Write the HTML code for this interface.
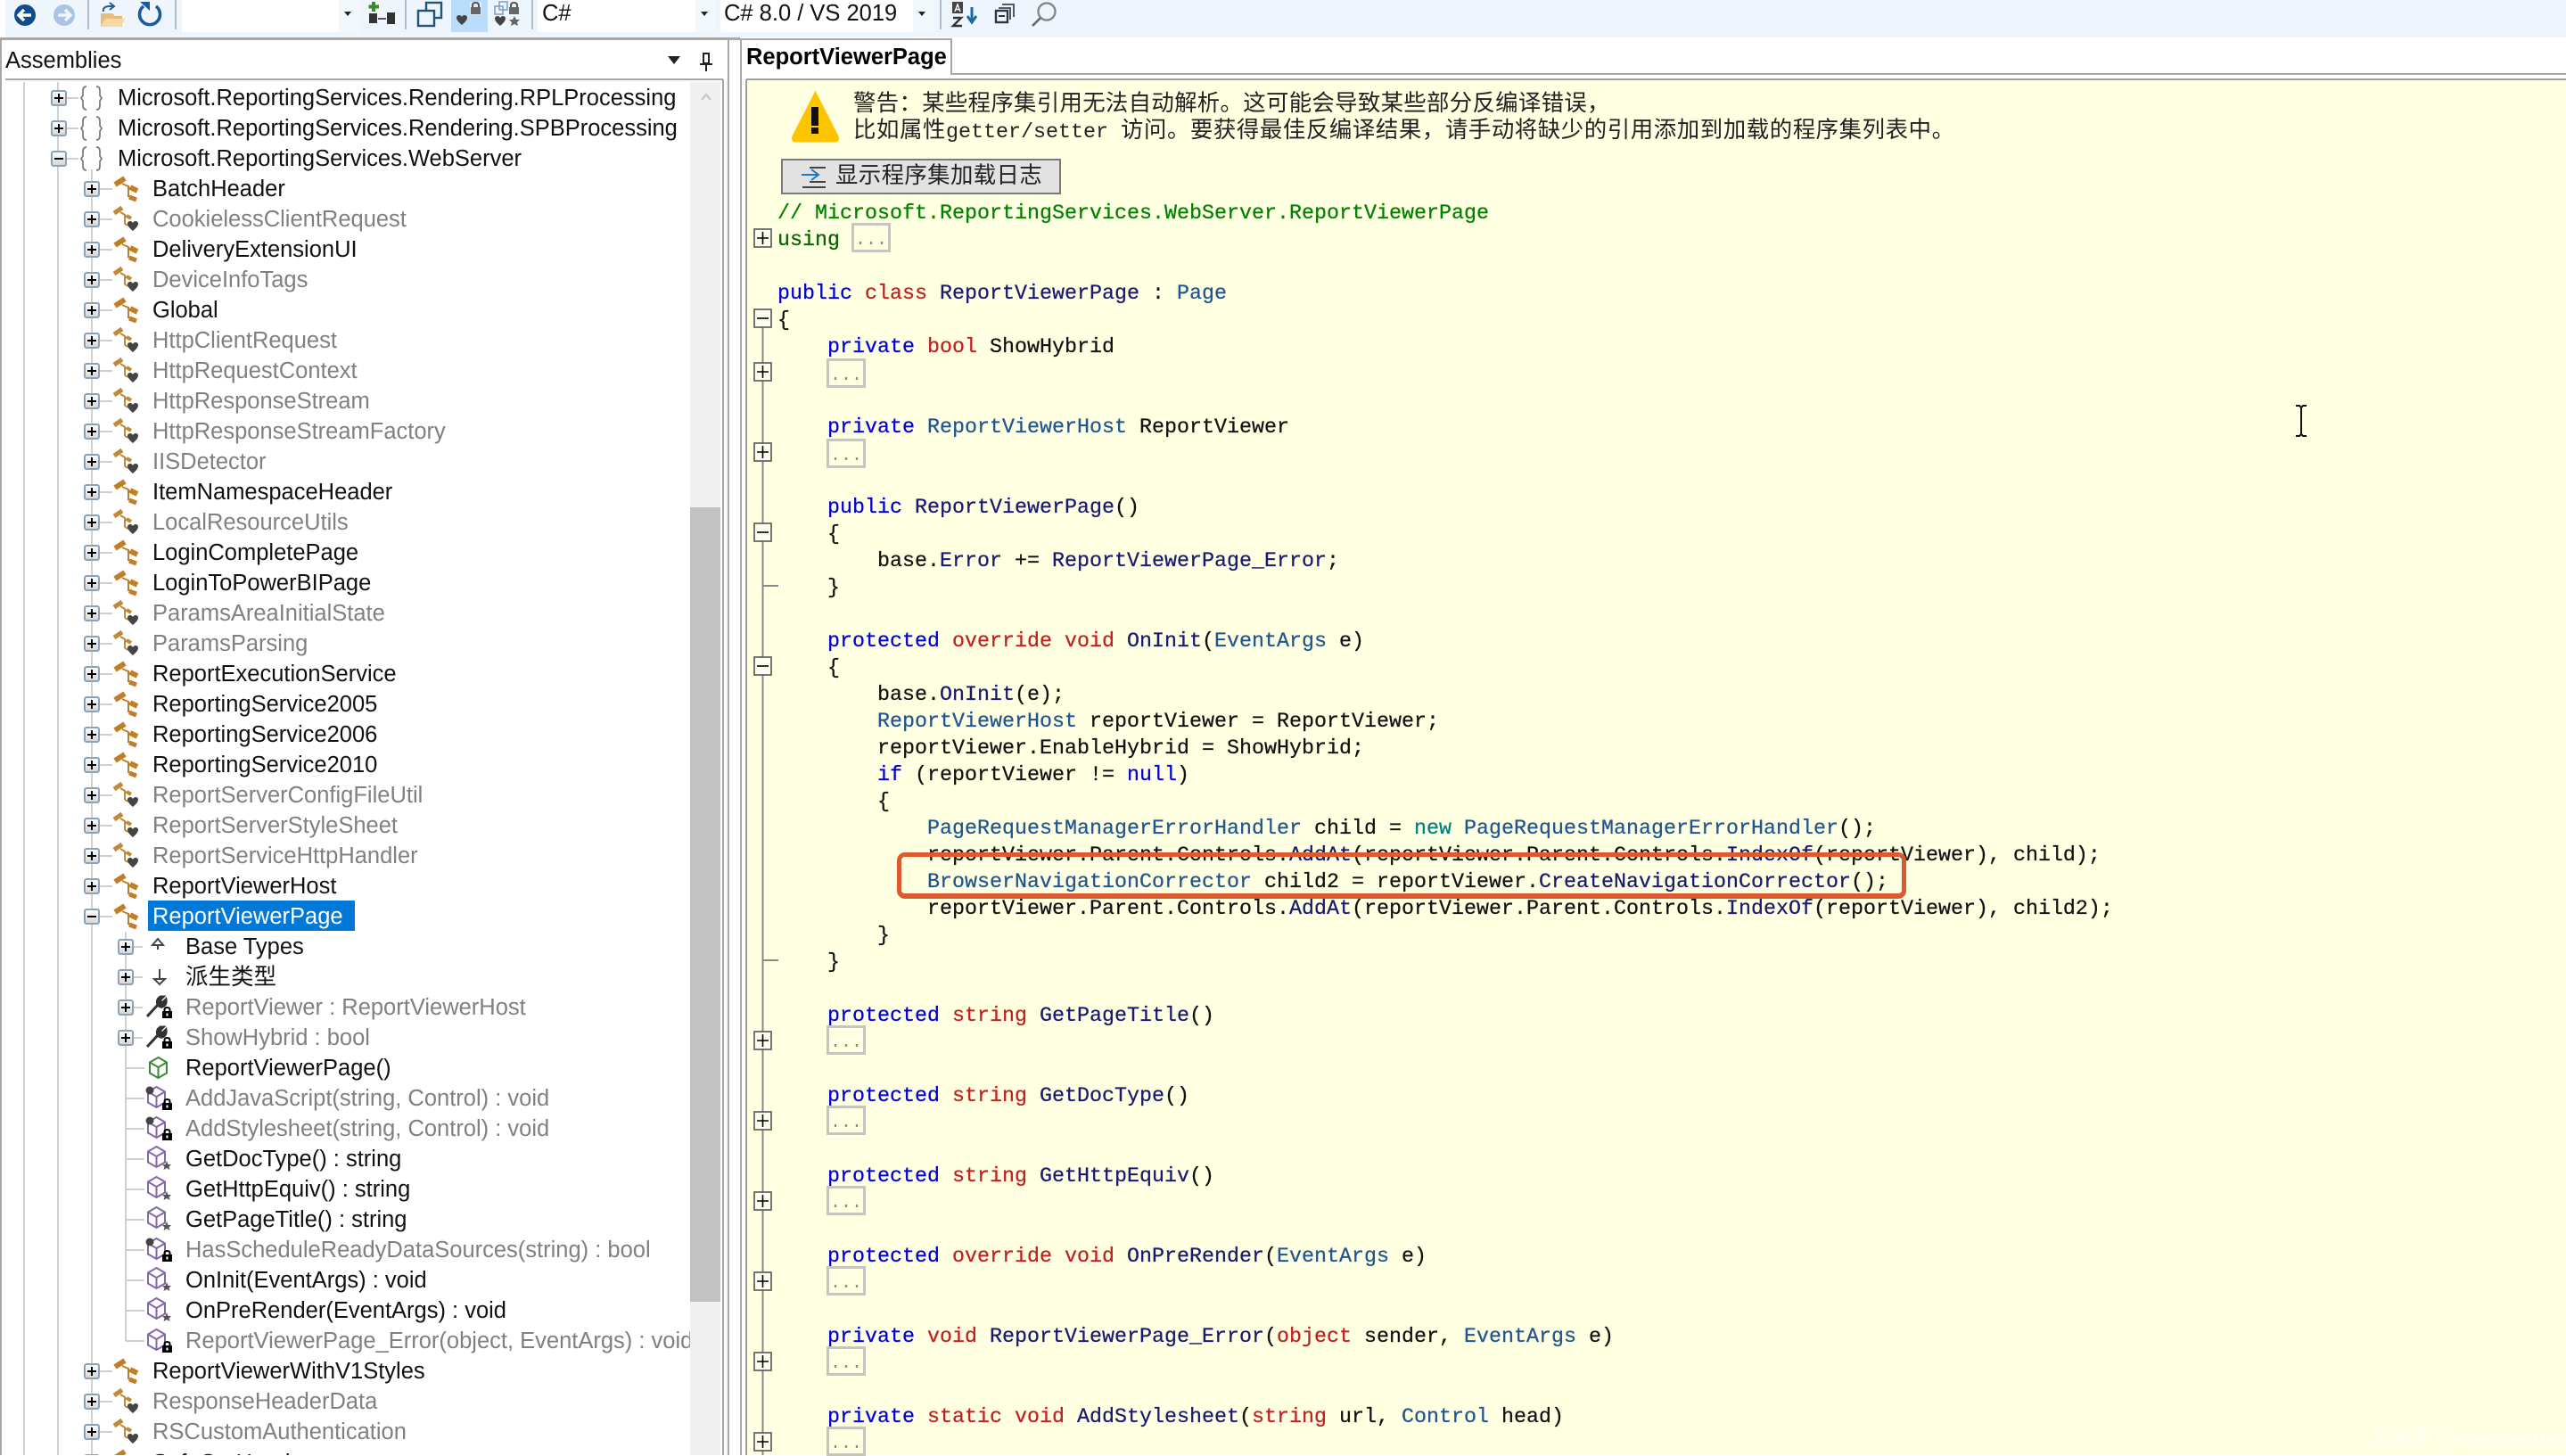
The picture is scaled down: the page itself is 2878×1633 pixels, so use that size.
<!DOCTYPE html>
<html lang="zh"><head><meta charset="utf-8"><title>ILSpy</title>
<style>
html,body{margin:0;padding:0;background:#fff}
body{position:relative;width:2878px;height:1632px;overflow:hidden;font-family:"Liberation Sans","Noto Sans CJK SC",sans-serif;color:#111}
.a{position:absolute}
.t{position:absolute;white-space:nowrap;font:25.5px/34px "Liberation Sans","Noto Sans CJK SC",sans-serif;color:#111}
.g{color:#808080}
pre{position:absolute;left:872px;top:225px;margin:0;font:23.33px/30px "Liberation Mono","Noto Sans CJK SC",monospace;color:#111;-webkit-text-stroke:.25px currentColor}
.k{color:#0000d8}.r{color:#c02020}.n{color:#191970}.s{color:#1f5590}.u{color:#006400}.c{color:#008000}.w{color:#008080}
.cj{position:absolute;left:957px;white-space:pre;font:25.4px/30px "Liberation Mono","Noto Sans CJK SC",monospace;color:#222}
.cj b{font:23.33px/30px "Liberation Mono",monospace;letter-spacing:0}
.e{position:absolute;width:38px;height:27px;border:3px solid #c6c6bc;font:20px/34px "Liberation Mono",monospace;color:#8a8a80;text-align:center;overflow:hidden}
</style></head><body>

<div class="a" style="left:6px;top:0;width:2872px;height:42px;background:#eff5fc"></div>
<div class="a" style="left:204px;top:0;width:199px;height:36px;background:#fff"></div>
<div class="a" style="left:380px;top:0;width:23px;height:36px;background:#f3f8fd"></div>
<div class="a" style="left:603px;top:0;width:199px;height:36px;background:#fff"></div>
<div class="a" style="left:780px;top:0;width:22px;height:36px;background:#f3f8fd"></div>
<div class="a" style="left:808px;top:0;width:239px;height:36px;background:#fff"></div>
<div class="a" style="left:1024px;top:0;width:23px;height:36px;background:#f3f8fd"></div>
<div class="a" style="left:506px;top:0;width:41px;height:36px;background:#b9dcfb"></div>
<div class="a" style="left:774px;top:92px;width:34px;height:1540px;background:#f0f0f0"></div>
<div class="a" style="left:774px;top:569px;width:34px;height:891px;background:#c2c2c2"></div>
<div class="a" style="left:837px;top:89px;width:2041px;height:1543px;background:#ffffe1"></div>
<div class="a" style="left:166px;top:1010px;width:232px;height:34px;background:#0078d7"></div>
<div class="a" style="left:1006px;top:956px;width:1122px;height:41px;border:5px solid #dc5a30;border-bottom-width:6px;border-radius:9px;z-index:5"></div>
<div class="a" style="left:876px;top:178px;width:310px;height:36px;background:#e2e2e2;border:2px solid #7a7a7a"></div>

<svg class="a" style="left:0;top:0" width="2878" height="1632" viewBox="0 0 2878 1632" fill="none">
<defs>
<linearGradient id="bg" x1="0" y1="0" x2="0" y2="1"><stop offset="0" stop-color="#fff"/><stop offset="1" stop-color="#d4d4d4"/></linearGradient>
<g id="bp"><rect x="-8" y="-8" width="16" height="16" rx="2" fill="url(#bg)" stroke="#8ca2b8" stroke-width="2"/><path d="M-5 0H5M0-5V5" stroke="#000" stroke-width="2"/></g>
<g id="bm"><rect x="-8" y="-8" width="16" height="16" rx="2" fill="url(#bg)" stroke="#8ca2b8" stroke-width="2"/><path d="M-5 0H5" stroke="#000" stroke-width="2"/></g>
<path id="heart" d="M0 3Q0 0 3 0Q5 0 6 2Q7 0 9 0Q12 0 12 3Q12 6 6 11Q0 6 0 3Z" fill="#444"/>
<g id="lock"><path d="M2.5 5V3.5Q2.5 1 5.5 1Q8.5 1 8.5 3.5V5" stroke="#000" stroke-width="2"/><rect x="0" y="5" width="11" height="8" fill="#000"/><rect x="4.5" y="7.5" width="2" height="3" fill="#fff"/></g>
<g id="cls" transform="translate(127,-15)" stroke="#bf7f28"><path d="M2 10L13 3" stroke-width="6"/><path d="M10 9L17 12V24M17 13L22 15M17 23L20 24" stroke-width="2"/><path d="M19 13L27 17" stroke-width="6"/><path d="M18 24L26 27" stroke-width="5"/></g>
<g id="cli" transform="translate(127,-15)" stroke="#c08838"><path d="M1 8L10 2" stroke-width="5"/><path d="M8 7L13 10V20M13 11L18 13M13 20L17 22" stroke-width="2"/><path d="M15 11L20 14" stroke-width="4"/></g>
<g id="a"><path d="M112 0H126" stroke="#cfcfcf" stroke-width="2"/><use href="#bp" x="103"/><use href="#cls"/></g>
<g id="b"><path d="M112 0H126" stroke="#cfcfcf" stroke-width="2"/><use href="#bp" x="103"/><use href="#cli"/><use href="#heart" x="143" y="2"/></g>
<g id="ns"><path d="M75 0H88" stroke="#cfcfcf" stroke-width="2"/><path d="M97-13Q93-13 93-8V-3L91 0L93 3V8Q93 13 97 13M108-13Q112-13 112-8V-3L114 0L112 3V8Q112 13 108 13" stroke="#777" stroke-width="1.7"/></g>
<path id="tk3" d="M141 0H162" stroke="#cfcfcf" stroke-width="2"/>
<path id="cube" d="M10.5 1L20 6.5V18.5L10.5 24L1 18.5V6.5ZM1 6.5L10.5 12L20 6.5M10.5 12V24"/>
<g id="m0"><use href="#tk3"/><use href="#cube" x="165" y="-14" stroke="#8466aa" stroke-width="2" fill="#fff"/><circle cx="168" cy="-9" r="4.5" fill="#444"/><use href="#lock" x="182" y="0"/></g>
<g id="m1"><use href="#tk3"/><use href="#cube" x="165" y="-15" stroke="#8466aa" stroke-width="2" fill="#fff"/><path d="M187 2L188.5 6H192L189.500 8.500L190.500 12L187 10L183.500 12L184.500 8.500L182 6H185.500Z" fill="#555"/></g>
<g id="m2"><use href="#tk3"/><use href="#cube" x="165" y="-14" stroke="#8466aa" stroke-width="2" fill="#fff"/><use href="#lock" x="182" y="0"/></g>
<g id="wr"><path d="M150 0H160" stroke="#cfcfcf" stroke-width="2"/><use href="#bp" x="141"/><path d="M165 10L177-3M177-3Q175-9 180-12L183-12L179-8L182-5L186-9Q187-3 182-1Q180 0 177-3" stroke="#333" stroke-width="3" fill="#333"/><use href="#lock" x="182" y="-1"/></g>
<g id="fp"><rect x="846" y="-10" width="19" height="20" fill="#fdfdf0" stroke="#555" stroke-width="1.600"/><path d="M849 0H862M855.500-7V7" stroke="#000" stroke-width="1.600"/></g>
<g id="fm"><rect x="846" y="-10" width="19" height="20" fill="#fdfdf0" stroke="#555" stroke-width="1.600"/><path d="M849 0H862" stroke="#000" stroke-width="1.600"/></g>
</defs>

<!-- frame -->
<path d="M0 44H817M1 44V1632M817 44V1632M6 89H811M811 89V1632M831 1632V44H1067V83H2878M837 1632V89H1067M1067 89H2878" stroke="#a8a8a8" stroke-width="2"/>
<path d="M0 43.500H830" stroke="#a8a8a8" stroke-width="3"/>
<rect x="832" y="45" width="234" height="44" fill="#fff"/>
<path d="M837 89V1632M837 89H2878" stroke="#a0a0a0" stroke-width="2"/>
<!-- tree guides -->
<path d="M27 92V1632M65 92V1632M103 190V1632M141 1045V1504" stroke="#d2d2d2" stroke-width="2"/>
<!-- toolbar seps -->
<path d="M99 0V33M197 0V33M455 0V33M597 0V33M1055 0V33" stroke="#b4bcc6" stroke-width="2"/>
<!-- back/forward -->
<circle cx="28" cy="17" r="12" fill="#0f4c8a"/><path d="M35 17H22M27 11L21 17L27 23" stroke="#fff" stroke-width="3.400"/>
<circle cx="72" cy="17" r="12" fill="#a9c4e0"/><path d="M65 17H78M73 11L79 17L73 23" stroke="#eff5fc" stroke-width="3.400"/>
<!-- open -->
<path d="M113 30V15H126L129 18H137V30Z" fill="#e8bd7a"/><path d="M113 30L118 21H140L136 30Z" fill="#f7d9a4"/>
<path d="M116 13Q115 7 123 7H127M123 3L128 7L123 11" stroke="#1f5f96" stroke-width="2"/>
<!-- refresh -->
<path d="M162 6A11.500 11.500 0 1 0 176 6" stroke="#1a5a9c" stroke-width="3.600" transform="translate(-1,1)"/><path d="M157 2H168V12Z" fill="#1a5a9c"/>
<!-- dropdown arrows -->
<path d="M386 13H394L390 18ZM786 13H794L790 18ZM1030 13H1038L1034 18Z" fill="#222"/>
<!-- add -->
<path d="M419 2V13M413.500 7.500H425" stroke="#3a8a2e" stroke-width="4"/><rect x="414" y="15" width="9" height="11" fill="#333"/><path d="M424 21H433" stroke="#555" stroke-width="2"/><rect x="434" y="14" width="9" height="13" fill="#333"/>
<!-- copy -->
<rect x="478" y="3" width="17" height="17" fill="#eef4fb" stroke="#1f5678" stroke-width="2.400"/><rect x="469" y="12" width="18" height="17" fill="#eef4fb" stroke="#1f5678" stroke-width="2.400"/>
<!-- heart lock -->
<use href="#heart" x="512" y="17"/><rect x="527" y="2" width="13" height="15" fill="#e4eef8"/><path d="M530 8V6Q530 3 533.500 3Q537 3 537 6V8" stroke="#555" stroke-width="2"/><rect x="528" y="8" width="11" height="8" fill="#666"/>
<!-- vis all -->
<rect x="560" y="2" width="9" height="9" stroke="#7ea3c4" stroke-width="1.600"/><rect x="555" y="7" width="9" height="9" stroke="#7ea3c4" stroke-width="1.600"/><use href="#heart" x="555" y="18"/>
<path d="M573 8V6Q573 3 576.500 3Q580 3 580 6V8" stroke="#555" stroke-width="2"/><rect x="571" y="8" width="11" height="8" fill="#666"/><path d="M577 18L579 22H583L580 25L581 29L577 27L573 29L574 25L571 22H575Z" fill="#666"/>
<!-- AZ -->
<rect x="1068" y="2" width="12" height="13" fill="#444"/><path d="M1071 13L1074 5L1077 13M1072 10.500H1076" stroke="#fff" stroke-width="1.400"/>
<path d="M1069 20H1078L1069 29H1079" stroke="#333" stroke-width="2.400"/>
<path d="M1090 8V24M1085 18L1090 25L1095 18" stroke="#1a6aa8" stroke-width="3"/>
<!-- window -->
<path d="M1124 5H1137V19M1120 9H1133V22" stroke="#445" stroke-width="1.800"/><rect x="1117" y="12" width="13" height="13" fill="#eff5fc" stroke="#334" stroke-width="2.400"/><path d="M1120 18H1127" stroke="#334" stroke-width="2"/>
<!-- magnifier -->
<circle cx="1174" cy="13" r="9.500" stroke="#888" stroke-width="2.400"/><path d="M1167 20L1158 29" stroke="#666" stroke-width="2.600"/>
<!-- assemblies header -->
<path d="M749 63H763L756 72Z" fill="#222"/>
<path d="M788 60H796M789 60V71H795V60M785 72H799M792 72V80" stroke="#222" stroke-width="2"/>
<path d="M787 112L792 106L797 112" stroke="#c4c4c4" stroke-width="2"/>

<!-- tree icons -->
<use href="#bp" x="66" y="110"/><use href="#ns" y="110"/>
<use href="#bp" x="66" y="144"/><use href="#ns" y="144"/>
<use href="#bm" x="66" y="178"/><use href="#ns" y="178"/>
<use href="#a" y="212"/><use href="#b" y="246"/><use href="#a" y="280"/><use href="#b" y="314"/><use href="#a" y="348"/>
<use href="#b" y="382"/><use href="#b" y="416"/><use href="#b" y="450"/><use href="#b" y="484"/><use href="#b" y="518"/>
<use href="#a" y="552"/><use href="#b" y="586"/><use href="#a" y="620"/><use href="#a" y="654"/><use href="#b" y="688"/>
<use href="#b" y="722"/><use href="#a" y="756"/><use href="#a" y="790"/><use href="#a" y="824"/><use href="#a" y="858"/>
<use href="#b" y="892"/><use href="#b" y="926"/><use href="#b" y="960"/><use href="#a" y="994"/>
<path d="M112 1028H126" stroke="#cfcfcf" stroke-width="2"/><use href="#bm" x="103" y="1028"/><use href="#cls" y="1028"/>
<g transform="translate(0,1062)"><path d="M150 0H160" stroke="#cfcfcf" stroke-width="2"/><use href="#bp" x="141"/><path d="M177 3V-3M171-2L177-9L183-2Z" stroke="#444" stroke-width="2"/></g>
<g transform="translate(0,1096)"><path d="M150 0H160" stroke="#cfcfcf" stroke-width="2"/><use href="#bp" x="141"/><path d="M179-9V2M173 2H185L179 8Z" stroke="#444" stroke-width="2"/></g>
<use href="#wr" y="1130"/><use href="#wr" y="1164"/>
<g transform="translate(0,1198)"><use href="#tk3"/><use href="#cube" x="167" y="-13" stroke="#3a8a3a" stroke-width="2" fill="#fff"/></g>
<use href="#m0" y="1232"/><use href="#m0" y="1266"/><use href="#m1" y="1300"/><use href="#m1" y="1334"/><use href="#m1" y="1368"/>
<use href="#m0" y="1402"/><use href="#m1" y="1436"/><use href="#m1" y="1470"/><use href="#m2" y="1504"/>
<use href="#a" y="1538"/><use href="#b" y="1572"/><use href="#b" y="1606"/><use href="#a" y="1640"/>

<!-- warning icon -->
<path d="M914.500 105L939 153Q941 158 936 158H893Q888 158 890 153Z" fill="#fcc500" stroke="#fcc500" stroke-width="3"/>
<rect x="910" y="120" width="8" height="21" fill="#111"/><rect x="910" y="143" width="8" height="7" fill="#111"/>
<!-- button icon -->
<path d="M899 196H918M910 190L918 196L910 202" stroke="#1f78c8" stroke-width="2"/><path d="M908 204H926M900 210H926M908 188H926" stroke="#444" stroke-width="2"/>

<!-- fold -->
<path d="M855.500 348V1632M855.500 657H873M855.500 1077H873" stroke="#888" stroke-width="2"/>
<use href="#fp" y="267"/><use href="#fm" y="357"/><use href="#fp" y="417"/><use href="#fp" y="507"/><use href="#fm" y="597"/><use href="#fm" y="747"/>
<use href="#fp" y="1167"/><use href="#fp" y="1257"/><use href="#fp" y="1347"/><use href="#fp" y="1437"/><use href="#fp" y="1527"/><use href="#fp" y="1617"/>
<!-- I-beam -->
<path d="M2575 455H2579L2581 457L2583 455H2587M2581 457V487M2575 489H2579L2581 487L2583 489H2587" stroke="#111" stroke-width="2"/>
</svg>

<div class="t" style="left:608px;top:-2px">C#</div>
<div class="t" style="left:812px;top:-2px">C# 8.0 / VS 2019</div>
<div class="t" style="left:6px;top:51px">Assemblies</div>
<div class="t" style="left:837px;top:47px;font-weight:bold;color:#000">ReportViewerPage</div>

<div class="a" style="left:0;top:92px;width:774px;height:1540px;overflow:hidden">
<div class="a" style="left:0;top:-92px;width:774px;height:1700px">
<div class="t" style="left:132px;top:93px">Microsoft.ReportingServices.Rendering.RPLProcessing</div>
<div class="t" style="left:132px;top:127px">Microsoft.ReportingServices.Rendering.SPBProcessing</div>
<div class="t" style="left:132px;top:161px">Microsoft.ReportingServices.WebServer</div>
<div class="t" style="left:171px;top:195px">BatchHeader</div>
<div class="t g" style="left:171px;top:229px">CookielessClientRequest</div>
<div class="t" style="left:171px;top:263px">DeliveryExtensionUI</div>
<div class="t g" style="left:171px;top:297px">DeviceInfoTags</div>
<div class="t" style="left:171px;top:331px">Global</div>
<div class="t g" style="left:171px;top:365px">HttpClientRequest</div>
<div class="t g" style="left:171px;top:399px">HttpRequestContext</div>
<div class="t g" style="left:171px;top:433px">HttpResponseStream</div>
<div class="t g" style="left:171px;top:467px">HttpResponseStreamFactory</div>
<div class="t g" style="left:171px;top:501px">IISDetector</div>
<div class="t" style="left:171px;top:535px">ItemNamespaceHeader</div>
<div class="t g" style="left:171px;top:569px">LocalResourceUtils</div>
<div class="t" style="left:171px;top:603px">LoginCompletePage</div>
<div class="t" style="left:171px;top:637px">LoginToPowerBIPage</div>
<div class="t g" style="left:171px;top:671px">ParamsAreaInitialState</div>
<div class="t g" style="left:171px;top:705px">ParamsParsing</div>
<div class="t" style="left:171px;top:739px">ReportExecutionService</div>
<div class="t" style="left:171px;top:773px">ReportingService2005</div>
<div class="t" style="left:171px;top:807px">ReportingService2006</div>
<div class="t" style="left:171px;top:841px">ReportingService2010</div>
<div class="t g" style="left:171px;top:875px">ReportServerConfigFileUtil</div>
<div class="t g" style="left:171px;top:909px">ReportServerStyleSheet</div>
<div class="t g" style="left:171px;top:943px">ReportServiceHttpHandler</div>
<div class="t" style="left:171px;top:977px">ReportViewerHost</div>
<div class="t" style="left:171px;top:1011px;color:#fff">ReportViewerPage</div>
<div class="t" style="left:208px;top:1045px">Base Types</div>
<div class="t" style="left:208px;top:1079px">派生类型</div>
<div class="t g" style="left:208px;top:1113px">ReportViewer : ReportViewerHost</div>
<div class="t g" style="left:208px;top:1147px">ShowHybrid : bool</div>
<div class="t" style="left:208px;top:1181px">ReportViewerPage()</div>
<div class="t g" style="left:208px;top:1215px">AddJavaScript(string, Control) : void</div>
<div class="t g" style="left:208px;top:1249px">AddStylesheet(string, Control) : void</div>
<div class="t" style="left:208px;top:1283px">GetDocType() : string</div>
<div class="t" style="left:208px;top:1317px">GetHttpEquiv() : string</div>
<div class="t" style="left:208px;top:1351px">GetPageTitle() : string</div>
<div class="t g" style="left:208px;top:1385px">HasScheduleReadyDataSources(string) : bool</div>
<div class="t" style="left:208px;top:1419px">OnInit(EventArgs) : void</div>
<div class="t" style="left:208px;top:1453px">OnPreRender(EventArgs) : void</div>
<div class="t g" style="left:208px;top:1487px">ReportViewerPage_Error(object, EventArgs) : void</div>
<div class="t" style="left:171px;top:1521px">ReportViewerWithV1Styles</div>
<div class="t g" style="left:171px;top:1555px">ResponseHeaderData</div>
<div class="t g" style="left:171px;top:1589px">RSCustomAuthentication</div>
<div class="t" style="left:171px;top:1624px">SafeGetHeader</div>
</div></div>

<div class="cj" style="top:103px;letter-spacing:.33px">警告：某些程序集引用无法自动解析。这可能会导致某些部分反编译错误，</div>
<div class="cj" style="top:133px;letter-spacing:.6px">比如属性<b>getter/setter </b>访问。要获得最佳反编译结果，请手动将缺少的引用添加到加载的程序集列表中。</div>
<div class="cj" style="left:937px;top:184px;letter-spacing:.4px">显示程序集加载日志</div>

<pre><span class="c">// Microsoft.ReportingServices.WebServer.ReportViewerPage</span>
<span class="u">using</span>

<span class="k">public</span> <span class="r">class</span> <span class="n">ReportViewerPage</span> : <span class="s">Page</span>
{
    <span class="k">private</span> <span class="r">bool</span> ShowHybrid


    <span class="k">private</span> <span class="s">ReportViewerHost</span> ReportViewer


    <span class="k">public</span> <span class="n">ReportViewerPage</span>()
    {
        base.<span class="n">Error</span> += <span class="n">ReportViewerPage_Error</span>;
    }

    <span class="k">protected</span> <span class="r">override</span> <span class="r">void</span> <span class="n">OnInit</span>(<span class="s">EventArgs</span> e)
    {
        base.<span class="n">OnInit</span>(e);
        <span class="s">ReportViewerHost</span> reportViewer = ReportViewer;
        reportViewer.EnableHybrid = ShowHybrid;
        <span class="k">if</span> (reportViewer != <span class="k">null</span>)
        {
            <span class="s">PageRequestManagerErrorHandler</span> child = <span class="w">new</span> <span class="s">PageRequestManagerErrorHandler</span>();
            reportViewer.Parent.Controls.<span class="n">AddAt</span>(reportViewer.Parent.Controls.<span class="n">IndexOf</span>(reportViewer), child);
            <span class="s">BrowserNavigationCorrector</span> child2 = reportViewer.<span class="n">CreateNavigationCorrector</span>();
            reportViewer.Parent.Controls.<span class="n">AddAt</span>(reportViewer.Parent.Controls.<span class="n">IndexOf</span>(reportViewer), child2);
        }
    }

    <span class="k">protected</span> <span class="r">string</span> <span class="n">GetPageTitle</span>()


    <span class="k">protected</span> <span class="r">string</span> <span class="n">GetDocType</span>()


    <span class="k">protected</span> <span class="r">string</span> <span class="n">GetHttpEquiv</span>()


    <span class="k">protected</span> <span class="r">override</span> <span class="r">void</span> <span class="n">OnPreRender</span>(<span class="s">EventArgs</span> e)


    <span class="k">private</span> <span class="r">void</span> <span class="n">ReportViewerPage_Error</span>(<span class="r">object</span> sender, <span class="s">EventArgs</span> e)


    <span class="k">private</span> <span class="r">static</span> <span class="r">void</span> <span class="n">AddStylesheet</span>(<span class="r">string</span> url, <span class="s">Control</span> head)
</pre>

<div class="e" style="left:955px;top:250px">...</div>
<div class="e" style="left:927px;top:402px">...</div>
<div class="e" style="left:927px;top:492px">...</div>
<div class="e" style="left:927px;top:1150px">...</div>
<div class="e" style="left:927px;top:1240px">...</div>
<div class="e" style="left:927px;top:1330px">...</div>
<div class="e" style="left:927px;top:1420px">...</div>
<div class="e" style="left:927px;top:1510px">...</div>
<div class="e" style="left:927px;top:1600px">...</div>

<div class="a" style="left:2660px;top:1598px;white-space:nowrap;font:bold 22px/30px 'Liberation Sans','Noto Sans CJK SC',sans-serif;color:#fffff2">安全客 ( www.anquanke.com )</div>
</body></html>
